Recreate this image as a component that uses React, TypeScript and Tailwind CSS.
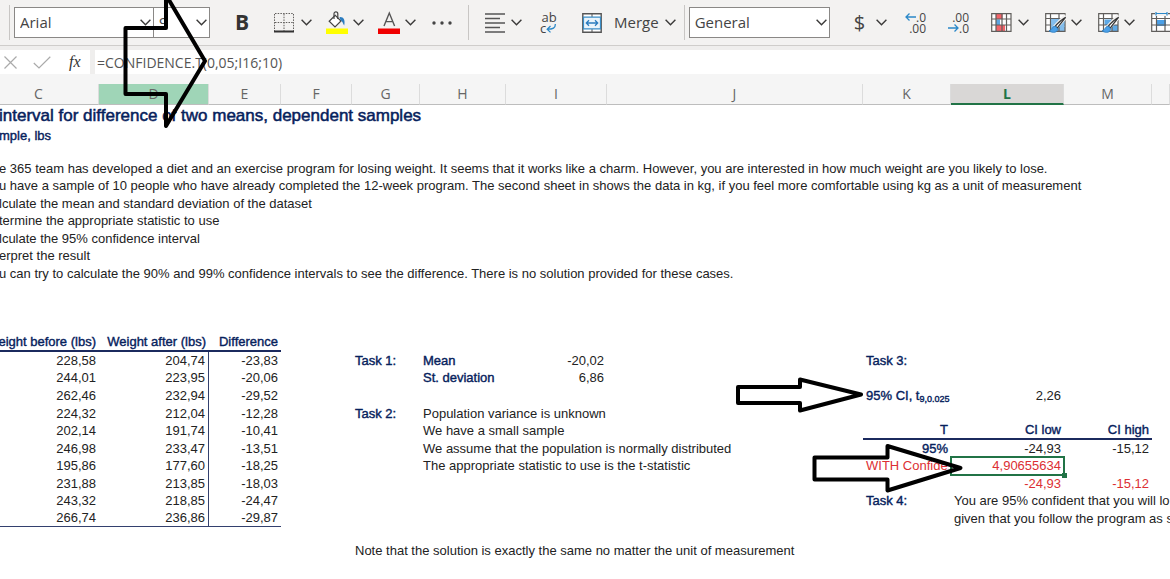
import { useState } from 'react';
import type { ReactNode } from 'react';
import clsx from 'clsx';

type Cell = { text: ReactNode; className?: string; right?: boolean };
type Row = { height: string; cells: Record<string, Cell> };

const columns = [
  { id: 'C', width: 'w-[120px]' },
  { id: 'D', width: 'w-[110px]' },
  { id: 'E', width: 'w-[72px]' },
  { id: 'F', width: 'w-[71px]' },
  { id: 'G', width: 'w-[68px]' },
  { id: 'H', width: 'w-[86px]' },
  { id: 'I', width: 'w-[101px]' },
  { id: 'J', width: 'w-[256px]' },
  { id: 'K', width: 'w-[88px]' },
  { id: 'L', width: 'w-[113px]' },
  { id: 'M', width: 'w-[88px]' },
  { id: '', width: '' },
];

const strong = 'text-[#06215c] [-webkit-text-stroke:0.03em_#06215c]';
const red = 'text-[#dc2f33]';
const short = 'h-[17px]';
const tall = 'h-[18px]';

// text that runs in from the columns scrolled off on the left
const spill = (text: string, className = ''): Cell => ({ text, className: clsx('pl-5', className) });
const label = (text: ReactNode): Cell => ({ text, className: clsx('pl-[3px]', strong) });
const note = (text: string, className = ''): Cell => ({ text, className: clsx('pl-[3px]', className) });
const num = (text: string, className = ''): Cell => ({ text, className, right: true });

const head = (text: string): Cell => num(text, clsx(strong, 'border-b-2 border-[#1b2a5e]'));
const weights = (before: string, after: string, diff: string, last = false) => {
  const line = last ? 'border-b border-[#33406e]' : '';
  return {
    C: num(before, line),
    D: num(after, clsx(line, 'border-r border-r-[#33406e]')),
    E: num(diff, line),
  };
};

const rows: Row[] = [
  {
    height: 'h-[21px]',
    cells: { C: spill('interval for difference of two means, dependent samples', clsx(strong, 'text-[17px]')) },
  },
  { height: 'h-[19px]', cells: { C: spill('mple, lbs', strong) } },
  { height: 'h-[15px]', cells: {} },
  {
    height: short,
    cells: {
      C: spill(
        'e 365 team has developed a diet and an exercise program for losing weight. It seems that it works like a charm. However, you are interested in how much weight are you likely to lose.'
      ),
    },
  },
  {
    height: tall,
    cells: {
      C: spill(
        'u have a sample of 10 people who have already completed the 12-week program. The second sheet in shows the data in kg, if you feel more comfortable using kg as a unit of measurement'
      ),
    },
  },
  { height: short, cells: { C: spill('lculate the mean and standard deviation of the dataset') } },
  { height: tall, cells: { C: spill('termine the appropriate statistic to use') } },
  { height: short, cells: { C: spill('lculate the 95% confidence interval') } },
  { height: tall, cells: { C: spill('erpret the result') } },
  {
    height: short,
    cells: {
      C: spill('u can try to calculate the 90% and 99% confidence intervals to see the difference. There is no solution provided for these cases.'),
    },
  },
  { height: tall, cells: {} },
  { height: short, cells: {} },
  { height: short, cells: {} },
  { height: tall, cells: { C: head('Weight before (lbs)'), D: head('Weight after (lbs)'), E: head('Difference') } },
  {
    height: short,
    cells: {
      ...weights('228,58', '204,74', '-23,83'),
      G: label('Task 1:'),
      H: label('Mean'),
      I: num('-20,02'),
      K: label('Task 3:'),
    },
  },
  { height: tall, cells: { ...weights('244,01', '223,95', '-20,06'), H: label('St. deviation'), I: num('6,86') } },
  {
    height: tall,
    cells: {
      ...weights('262,46', '232,94', '-29,52'),
      K: label(
        <>
          95% CI, t<sub className="text-[9px] leading-none">9,0.025</sub>
        </>
      ),
      L: num('2,26'),
    },
  },
  {
    height: short,
    cells: { ...weights('224,32', '212,04', '-12,28'), G: label('Task 2:'), H: note('Population variance is unknown') },
  },
  {
    height: tall,
    cells: {
      ...weights('202,14', '191,74', '-10,41'),
      H: note('We have a small sample'),
      K: head('T'),
      L: head('CI low'),
      M: head('CI high'),
    },
  },
  {
    height: short,
    cells: {
      ...weights('246,98', '233,47', '-13,51'),
      H: note('We assume that the population is normally distributed'),
      K: num('95%', strong),
      L: num('-24,93'),
      M: num('-15,12'),
    },
  },
  {
    height: tall,
    cells: {
      ...weights('195,86', '177,60', '-18,25'),
      H: note('The appropriate statistic to use is the t-statistic'),
      K: note('WITH Confide', red),
      L: num('4,90655634', clsx(red, 'relative')),
    },
  },
  {
    height: short,
    cells: { ...weights('231,88', '213,85', '-18,03'), L: num('-24,93', red), M: num('-15,12', red) },
  },
  {
    height: tall,
    cells: {
      ...weights('243,32', '218,85', '-24,47'),
      K: label('Task 4:'),
      L: note('You are 95% confident that you will lo'),
    },
  },
  {
    height: short,
    cells: { ...weights('266,74', '236,86', '-29,87', true), L: note('given that you follow the program as s') },
  },
  { height: 'h-[15px]', cells: {} },
  { height: tall, cells: { G: note('Note that the solution is exactly the same no matter the unit of measurement') } },
];

function Chevron({ className }: { className?: string }) {
  return (
    <svg className={clsx('h-[7px] w-[11px] shrink-0', className)} viewBox="0 0 11 7" fill="none" stroke="#3b3a39" strokeWidth="1.4">
      <path d="M.6 .8 5.5 5.8 10.4 .8" />
    </svg>
  );
}

function Tool({ name, className, children }: { name: string; className?: string; children: ReactNode }) {
  return (
    <button type="button" aria-label={name} className={clsx('flex h-[30px] shrink-0 items-center', className)}>
      {children}
    </button>
  );
}

function Divider({ className }: { className?: string }) {
  return <div className={clsx('h-[35px] w-px shrink-0 bg-[#c8c6c4]', className)} />;
}

function Picker({ name, value, width }: { name: string; value: string; width: string }) {
  return (
    <div className={clsx('relative h-[31px] shrink-0', width)}>
      <select
        aria-label={name}
        defaultValue={value}
        className="h-full w-full appearance-none border border-[#8a8886] bg-white pl-[5px] text-[15px] text-[#444]"
      >
        <option>{value}</option>
      </select>
      <Chevron className="pointer-events-none absolute top-3 right-[3px]" />
    </div>
  );
}

function BordersIcon() {
  return (
    <svg className="h-5 w-5" viewBox="0 0 20 20" fill="none" stroke="#605e5c">
      <path d="M1 .5H19M.5 1V18M19.5 1V18M10 1V18M1 9.5H19" strokeDasharray="1.5 1.2" />
      <path d="M0 18.5H20" stroke="#333" strokeWidth="2" />
    </svg>
  );
}

function FillIcon() {
  return (
    <svg className="h-[23px] w-[22px]" viewBox="0 0 22 23" fill="none">
      <path d="M3.2 10.2 9.2 4.3 15 10 9 16Z" fill="#fff" stroke="#444" strokeWidth="1.2" />
      <path d="M8 8V2.8C8 .2 11.8 .2 11.8 2.8V8" stroke="#444" strokeWidth="1.2" />
      <path d="M13.5 6C17.5 5.5 19.5 9 18.2 14.5C17 13 16.8 10 14.5 9.2Z" fill="#2b7cbf" />
      <path d="M0 17.5H22V23H0Z" fill="#ff0" />
    </svg>
  );
}

function FontColorIcon() {
  return (
    <svg className="h-[23px] w-[22px]" viewBox="0 0 22 23" fill="none">
      <path d="M6 15 11.3 2 16.6 15M8 10.6H14.7" stroke="#555" strokeWidth="1.4" />
      <path d="M0 17.5H22V23H0Z" fill="#f00000" />
    </svg>
  );
}

function MergeIcon() {
  return (
    <svg className="h-5 w-5" viewBox="0 0 20 20" fill="none">
      <path d="M.8 .8H19.2V19.2H.8Z" fill="#fff" stroke="#555" strokeWidth="1.4" />
      <path d="M10 1V4M10 16V19" stroke="#555" />
      <path d="M1.5 4.2H18.5V15.8H1.5Z" fill="#eaf4fb" stroke="#3a8dc6" strokeWidth="1.2" />
      <path d="M4.5 10H15.5M7 7.3 4.3 10 7 12.7M13 7.3 15.7 10 13 12.7" stroke="#2b7cbf" strokeWidth="1.3" />
    </svg>
  );
}

function ArrowLine({ flip }: { flip?: boolean }) {
  return (
    <svg className={clsx('h-2 w-[11px]', flip && 'rotate-180')} viewBox="0 0 11 8" fill="none" stroke="#2b88c8" strokeWidth="1.3">
      <path d="M11 4H1M4.5 .5 1 4 4.5 7.5" />
    </svg>
  );
}

function GridIcon({ variant }: { variant: 'conditional' | 'table' | 'cell' | 'insert' }) {
  return (
    <svg className="h-[21px] w-[21px]" viewBox="0 0 21 21" fill="none">
      <path d="M.7 1.7H20V19.3H.7Z" fill="#fff" />
      {variant === 'conditional' && (
        <>
          <path d="M5 2H11.5V7H5ZM5 13H14V19H5Z" fill="#f4646a" />
          <path d="M5 7.5H9V13H5Z" fill="#5ea5e0" />
          <path d="M.7 1.7H20V19.3H.7ZM1 7H20M1 13H20M5 2V19M11 2V19M15.5 2V19" stroke="#605e5c" strokeWidth="1.2" />
        </>
      )}
      {variant === 'table' && <path d="M5.5 6.5H20V19H5.5Z" fill="#83bdec" />}
      {variant === 'cell' && <path d="M6.5 7.5H13.5V13H20V19H13.5V13H6.5Z" fill="#5ea9e6" />}
      {variant === 'insert' && <path d="M6 8H15V14H6Z" fill="#4ba0e8" />}
      {variant !== 'conditional' && (
        <path d="M.7 1.7H20V19.3H.7ZM1 6.5H20M1 13H20M5.5 2V19M14 2V19" stroke="#605e5c" strokeWidth="1.2" />
      )}
      {(variant === 'table' || variant === 'cell') && (
        <>
          {variant === 'table' && <path d="M6.2 7.2H19.4V15H6.2Z" fill="#83bdec" />}
          <path d="M21 4 10 15.5" stroke="#f3f2f1" strokeWidth="5" />
          <path d="M20.6 5.2C19 7 13.5 14.5 12.3 16L10.3 14.2C12 12 18 6.3 20.6 5.2Z" fill="#fff" stroke="#333" strokeWidth="1.2" />
          <path d="M10.3 14.2C7 13.8 8 17.8 4 18.8C8 21.8 13.6 20.3 12.3 16Z" fill="#4ba0e8" stroke="#2b7cbf" strokeWidth=".8" />
        </>
      )}
      {variant === 'insert' && (
        <>
          <path d="M4 0H17V4H4Z" fill="#f3f2f1" />
          <path d="M5 1.5H16M5 0V3.5M16 0V3.5" stroke="#2b88c8" strokeWidth="1.2" />
        </>
      )}
    </svg>
  );
}

function Toolbar() {
  return (
    <div className="flex h-[46px] items-center overflow-hidden border-b border-[#cfcdcb] bg-[#f3f2f1] pl-[9px] text-[#444]">
      <Divider className="mr-1" />
      <Picker name="Font" value="Arial" width="w-[140px]" />
      <Picker name="Font size" value="9" width="-ml-px w-[57px]" />
      <Tool name="Bold" className="w-[64px] justify-center text-[21px] font-bold text-[#333]">
        B
      </Tool>
      <Tool name="Borders" className="gap-[7px]">
        <BordersIcon />
        <Chevron />
      </Tool>
      <Tool name="Fill color" className="ml-[14px] gap-[5px]">
        <FillIcon />
        <Chevron />
      </Tool>
      <Tool name="Font color" className="ml-[14px] gap-[5px]">
        <FontColorIcon />
        <Chevron />
      </Tool>
      <Tool name="More font options" className="ml-4">
        <svg className="h-1 w-5" viewBox="0 0 20 4" fill="#444">
          <circle cx="2" cy="2" r="1.7" />
          <circle cx="10" cy="2" r="1.7" />
          <circle cx="18" cy="2" r="1.7" />
        </svg>
      </Tool>
      <Divider className="mx-4" />
      <Tool name="Align" className="gap-[6px]">
        <svg className="h-5 w-5" viewBox="0 0 20 20" stroke="#555" strokeWidth="1.4">
          <path d="M0 1H20M0 5.5H15M0 10H20M0 14.5H15M0 19H20" />
        </svg>
        <Chevron />
      </Tool>
      <Tool name="Wrap text" className="ml-[18px]">
        <span className="flex w-[18px] flex-col text-[13px] leading-[11px]">
          <span>ab</span>
          <span className="flex items-center">
            c
            <svg className="h-[9px] w-[10px]" viewBox="0 0 10 9" fill="none" stroke="#2b88c8" strokeWidth="1.3">
              <path d="M9.3 0C9.5 4 7 5.2 1.2 5.2M4.5 2 1.2 5.2 4.5 8.4" />
            </svg>
          </span>
        </span>
      </Tool>
      <Tool name="Merge" className="ml-6 gap-[6px] text-[15px]">
        <MergeIcon />
        <span className="pl-[6px]">Merge</span>
        <Chevron />
      </Tool>
      <Divider className="mr-1 ml-2" />
      <Picker name="Number format" value="General" width="w-[141px]" />
      <Tool name="Currency" className="ml-6 gap-[11px]">
        <span className="text-[20px]">$</span>
        <Chevron />
      </Tool>
      <Tool name="Increase decimal" className="ml-[18px]">
        <span className="flex w-[21px] flex-col items-end text-[12px] leading-[11px]">
          <span className="flex items-center">
            <ArrowLine />
            .0
          </span>
          <span>.00</span>
        </span>
      </Tool>
      <Tool name="Decrease decimal" className="ml-[22px]">
        <span className="flex w-[21px] flex-col items-end text-[12px] leading-[11px]">
          <span>.00</span>
          <span className="flex items-center">
            <ArrowLine flip />
            .0
          </span>
        </span>
      </Tool>
      <Tool name="Conditional formatting" className="ml-[22px] gap-[6px]">
        <GridIcon variant="conditional" />
        <Chevron />
      </Tool>
      <Tool name="Format as table" className="ml-4 gap-[5px]">
        <GridIcon variant="table" />
        <Chevron />
      </Tool>
      <Tool name="Cell styles" className="ml-4 gap-[5px]">
        <GridIcon variant="cell" />
        <Chevron />
      </Tool>
      <Tool name="Insert" className="ml-4">
        <GridIcon variant="insert" />
      </Tool>
    </div>
  );
}

function FormulaBar() {
  const [formula, setFormula] = useState('=CONFIDENCE.T(0,05;I16;10)');

  return (
    <div className="flex h-[28px] gap-[5px] bg-[#efeeed] pt-1">
      <div className="flex w-[90px] shrink-0 items-center bg-white pl-1">
        <button type="button" aria-label="Cancel">
          <svg className="h-[13px] w-[13px]" viewBox="0 0 13 13" stroke="#aaa" strokeWidth="1.2">
            <path d="M.5 .5 12.5 12.5M12.5 .5 .5 12.5" />
          </svg>
        </button>
        <button type="button" aria-label="Enter" className="ml-4">
          <svg className="h-[13px] w-[18px]" viewBox="0 0 18 13" fill="none" stroke="#aaa" strokeWidth="1.2">
            <path d="M.8 7 6 12 17.3 .8" />
          </svg>
        </button>
        <button type="button" aria-label="Insert function" className="ml-[18px] font-['Liberation_Serif',serif] text-[16px] text-[#333] italic">
          fx
        </button>
      </div>
      <input
        aria-label="Formula"
        value={formula}
        onChange={(e) => setFormula(e.target.value)}
        className="min-w-0 flex-1 bg-white pl-[2px] text-[14px] text-[#555] outline-none"
      />
    </div>
  );
}

function Sheet() {
  return (
    <table className="w-full table-fixed border-separate border-spacing-0">
      <thead>
        <tr className="h-[21px]">
          {columns.map((col) => (
            <th
              key={col.id}
              scope="col"
              className={clsx(
                col.width,
                'border-r border-r-[#dcdcdc] p-0 text-[14px] leading-4',
                col.id === 'D' && 'bg-[#9fd5b7]',
                col.id === 'L'
                  ? 'border-b-2 border-b-[#217346] bg-[#d9d7d6] font-bold text-[#217346]'
                  : 'border-b border-b-[#bdbdbd] font-normal text-[#666]'
              )}
            >
              {col.id}
            </th>
          ))}
        </tr>
      </thead>
      <tbody className="bg-white font-['Liberation_Sans',Arial,sans-serif] text-[13px] text-[#222]">
        {rows.map((row, i) => (
          <tr key={i} className={row.height}>
            {columns.map((col) => {
              const cell = row.cells[col.id];
              if (!cell) return <td key={col.id} className="p-0" />;
              const selected = cell.text === '4,90655634';
              return (
                <td key={col.id} className={clsx('py-0 leading-4 whitespace-nowrap', cell.right && 'pr-[3px] pl-0', cell.className)}>
                  {cell.right ? <div className="flex justify-end">{cell.text}</div> : cell.text}
                  {selected && (
                    <div className="absolute -inset-px border-2 border-[#217346]">
                      <span className="absolute -right-1 -bottom-1 h-[5px] w-[5px] bg-[#217346]" />
                    </div>
                  )}
                </td>
              );
            })}
          </tr>
        ))}
      </tbody>
    </table>
  );
}

function Arrows() {
  return (
    <svg
      className="pointer-events-none absolute top-0 left-0 h-[500px] w-[970px]"
      viewBox="0 0 970 500"
      fill="none"
      stroke="#000"
      strokeWidth="4"
      strokeLinejoin="round"
    >
      <path d="M125.5 28H166V-5L205 61 166 126V94H125.5Z" />
      <path d="M738 387H800V379.5L861 394.5 800 410.5V403H738Z" />
      <path d="M814.5 457.5H887.5V446L960.5 468 887.5 490.5V479.5H814.5Z" />
    </svg>
  );
}

export default function App() {
  return (
    <main className="relative min-h-screen overflow-hidden bg-white font-['Open_Sans',sans-serif]">
      <Toolbar />
      <FormulaBar />
      <div className="-ml-[21px] bg-[#f5f5f5] pt-[10px]">
        <Sheet />
      </div>
      <Arrows />
    </main>
  );
}
